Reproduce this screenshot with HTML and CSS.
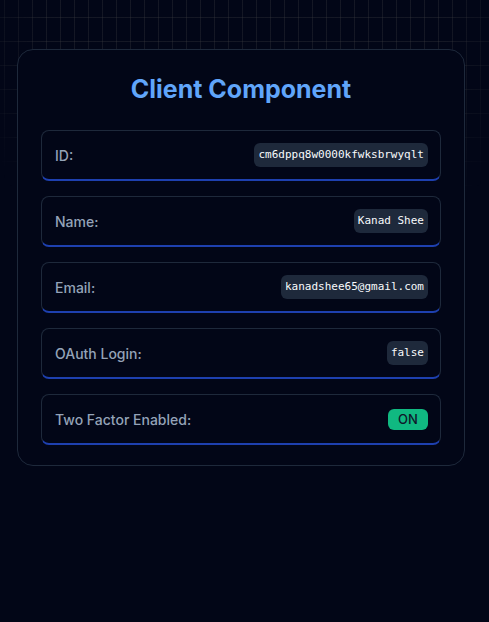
FILE: index.html
```html
<!DOCTYPE html>
<html lang="en">
<head>
<meta charset="utf-8">
<title>Client Component</title>
<link rel="stylesheet" href="styles.css">
</head>
<body>
<div class="grid-bg"></div>
<main class="page">
  <section class="card">
    <h1 class="title">Client Component</h1>
    <div class="rows">
      <div class="row"><span class="label">ID:</span><code class="chip">cm6dppq8w0000kfwksbrwyqlt</code></div>
      <div class="row"><span class="label">Name:</span><code class="chip">Kanad Shee</code></div>
      <div class="row"><span class="label">Email:</span><code class="chip">kanadshee65@gmail.com</code></div>
      <div class="row"><span class="label">OAuth Login:</span><code class="chip">false</code></div>
      <div class="row"><span class="label">Two Factor Enabled:</span><span class="badge">ON</span></div>
    </div>
  </section>
</main>
</body>
</html>
```

FILE: styles.css
```css
html, body {
  margin: 0;
  padding: 0;
  background: #020617;
  min-height: 100%;
}
body {
  font-family: Inter, "Noto Sans", sans-serif;
  position: relative;
  min-height: 622px;
}
.grid-bg {
  position: absolute;
  inset: 0;
  z-index: 0;
  background-image:
    linear-gradient(to right, rgba(79,79,79,0.25) 1px, transparent 1px),
    linear-gradient(to bottom, rgba(79,79,79,0.25) 1px, transparent 1px);
  background-size: 14px 24px;
  background-position: 4px 17px;
  -webkit-mask-image: radial-gradient(ellipse 60% 50% at 50% 0%, #000 70%, transparent 100%);
  mask-image: radial-gradient(ellipse 60% 50% at 50% 0%, #000 70%, transparent 100%);
}
.page {
  position: relative;
  z-index: 1;
  padding: 49px 0 0 17px;
}
.card {
  width: 448px;
  box-sizing: border-box;
  background: #020617;
  border: 1px solid #1e293b;
  border-radius: 16px;
  padding: 23px 23px 20px;
}
.title {
  margin: 0 0 25px;
  text-align: center;
  color: #60a5fa;
  font-size: 25px;
  line-height: 32px;
  font-weight: 700;
}
.rows {
  display: flex;
  flex-direction: column;
  gap: 15px;
}
.row {
  display: flex;
  align-items: center;
  justify-content: space-between;
  border: 1px solid #1e293b;
  border-bottom: 2px solid #1e40af;
  border-radius: 8px;
  padding: 12px 12px 12px 13px;
  height: 24px;
  background: #020617;
}
.label {
  color: #94a3b8;
  font-size: 14px;
  font-weight: 500;
}
.chip {
  font-family: "DejaVu Sans Mono", monospace;
  font-size: 11px;
  font-weight: 400;
  line-height: 16px;
  padding: 4px;
  background: #1e293b;
  color: #f8fafc;
  border-radius: 6px;
}
.badge {
  background: #10b981;
  color: #0f172a;
  font-size: 13px;
  font-weight: 500;
  line-height: 21px;
  width: 40px;
  text-align: center;
  border-radius: 6px;
}
```
